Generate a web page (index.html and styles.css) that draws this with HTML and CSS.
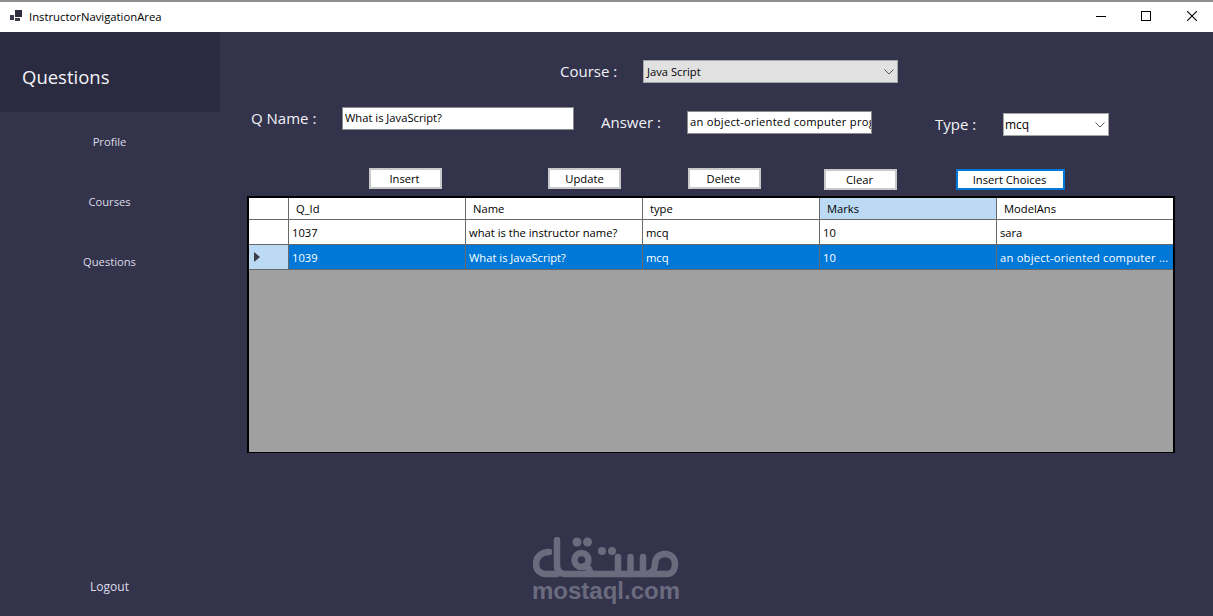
FILE: index.html
```html
<!DOCTYPE html>
<html lang="en">
<head>
<meta charset="utf-8">
<title>InstructorNavigationArea</title>
<link rel="stylesheet" href="styles.css">
</head>
<body>
<div class="window">
  <header class="titlebar">
    <svg class="app-icon" width="12" height="12" viewBox="0 0 12 12"><rect x="0" y="5" width="4" height="5" fill="#3a3a4a"/><rect x="5" y="8" width="5" height="3" fill="#3a3a4a"/><rect x="5" y="0" width="7" height="7" fill="#2c2c3c"/></svg>
    <span class="app-title">InstructorNavigationArea</span>
    <div class="win-controls">
      <svg class="win-btn" width="10" height="10" viewBox="0 0 10 10"><path d="M0 5.5H10" stroke="#000" fill="none"/></svg>
      <svg class="win-btn" width="10" height="10" viewBox="0 0 10 10"><rect x=".5" y=".5" width="9" height="9" stroke="#000" fill="none"/></svg>
      <svg class="win-btn" width="10" height="10" viewBox="0 0 10 10"><path d="M0 0L10 10M10 0L0 10" stroke="#000" stroke-width="1.1" fill="none"/></svg>
    </div>
  </header>
  <div class="app-body">
    <aside class="sidebar">
      <div class="side-head">Questions</div>
      <nav class="side-nav">
        <a class="side-link">Profile</a>
        <a class="side-link">Courses</a>
        <a class="side-link">Questions</a>
      </nav>
      <a class="side-link logout">Logout</a>
    </aside>
    <main class="content">
      <div class="course-row">
        <label class="field-label">Course :</label>
        <div class="combo combo-grey">Java Script
          <svg class="chev" width="10" height="6" viewBox="0 0 10 6"><path d="M.5 .5L5 5L9.5 .5" stroke="#555" fill="none"/></svg>
        </div>
      </div>
      <div class="q-row">
        <label class="field-label lbl-q">Q Name :</label>
        <div class="textbox tb-q">What is JavaScript?</div>
        <label class="field-label lbl-a">Answer :</label>
        <div class="textbox tb-a">an object-oriented computer prog</div>
        <label class="field-label lbl-t">Type :</label>
        <div class="combo combo-type">mcq
          <svg class="chev" width="10" height="6" viewBox="0 0 10 6"><path d="M.5 .5L5 5L9.5 .5" stroke="#555" fill="none"/></svg>
        </div>
      </div>
      <div class="btn-row">
        <button class="btn b-insert">Insert</button>
        <button class="btn b-update">Update</button>
        <button class="btn b-delete">Delete</button>
        <button class="btn b-clear">Clear</button>
        <button class="btn btn-focus">Insert Choices</button>
      </div>
      <div class="grid">
        <div class="grid-row head">
          <div class="cell rowhead"></div>
          <div class="cell">Q_Id</div>
          <div class="cell">Name</div>
          <div class="cell">type</div>
          <div class="cell sorted">Marks</div>
          <div class="cell">ModelAns</div>
        </div>
        <div class="grid-row">
          <div class="cell rowhead"></div>
          <div class="cell">1037</div>
          <div class="cell">what is the instructor name?</div>
          <div class="cell">mcq</div>
          <div class="cell">10</div>
          <div class="cell">sara</div>
        </div>
        <div class="grid-row selected">
          <div class="cell rowhead current"><svg width="6" height="10" viewBox="0 0 6 10"><path d="M0 0L6 5L0 10Z" fill="#3c3c46"/></svg></div>
          <div class="cell">1039</div>
          <div class="cell">What is JavaScript?</div>
          <div class="cell">mcq</div>
          <div class="cell">10</div>
          <div class="cell cell-long">an object-oriented computer ...</div>
        </div>
      </div>
      <div class="watermark">
        <svg class="wm-logo" width="146" height="42" viewBox="0 0 146 42" fill="none" stroke="#6b6b7e" stroke-width="6.5" stroke-linecap="round" stroke-linejoin="round">
          <path d="M24 3V28C24 34 27 37 33 37H134C139 37 142 33 142 27C142 21 138 17 132 17C126 17 122 21 122 27C122 33 118 37 112 37"/>
          <path d="M16 15C8 15 3 20 3 27C3 33 7 37 13 37H24"/>
          <circle cx="48.500" cy="23" r="7"/>
          <path d="M52 29C58 32 58 37 54 37"/>
          <path d="M85 20V37M97.500 20V37M110 20V37"/>
          <g fill="#6b6b7e" stroke="none">
            <circle cx="44" cy="5" r="4.500"/>
            <circle cx="54.500" cy="5" r="4.500"/>
            <circle cx="69" cy="14" r="4"/>
            <circle cx="79" cy="14" r="4"/>
          </g>
        </svg>
        <span class="wm-text">mostaql.com</span>
      </div>
    </main>
  </div>
</div>
</body>
</html>
```
FILE: styles.css
```css
* { box-sizing: border-box; }
html, body { margin: 0; padding: 0; }
body { width: 1213px; height: 616px; overflow: hidden; font-family: "Open Sans", "Noto Sans", sans-serif; font-size: 11px; color: #000; background: #33334c; }
.window { display: flex; flex-direction: column; height: 616px; }
.titlebar { flex: none; height: 32px; background: #fff; border-top: 2px solid #8f8f8f; display: flex; align-items: center; padding: 0 16px 2px 10px; }
.app-icon { margin-right: 7px; }
.app-title { font-size: 11.3px; }
.win-controls { margin-left: auto; display: flex; }
.win-btn { display: block; width: 10px; }
.win-btn + .win-btn { margin-left: 35px; }
.win-btn + .win-btn + .win-btn { margin-left: 36px; }
.app-body { flex: 1; display: flex; min-height: 0; }
.sidebar { width: 220px; flex: none; display: flex; flex-direction: column; background: #33334c; }
.side-head { height: 80px; background: #2a2a40; color: #f4f4f8; font-size: 18.5px; line-height: 89px; padding-left: 22px; overflow: hidden; }
.side-nav { display: flex; flex-direction: column; }
.side-link { display: block; height: 60px; line-height: 59px; padding-right: 1px; text-align: center; color: #dcdce6; font-size: 11.2px; }
.logout { margin-top: auto; height: 58px; line-height: 58px; font-size: 12px; }
.content { flex: 1; padding: 28px 38px 0 27px; }
.field-label { color: #f2f2f6; font-size: 15px; white-space: nowrap; }
.course-row { display: flex; align-items: flex-start; padding-left: 313px; height: 23px; }
.course-row .field-label { width: 83px; line-height: 23px; }
.combo { position: relative; height: 23px; line-height: 21px; border: 1px solid #a6a6a6; padding-left: 3px; font-size: 11.2px; flex: none; }
.combo-grey { width: 255px; background: #e1e1e1; }
.combo-type { width: 106px; background: #fff; margin-top: 6px; padding-left: 1px; font-size: 12px; }
.chev { position: absolute; right: 3px; top: 8px; }
.q-row { display: flex; align-items: flex-start; padding-left: 4px; margin-top: 24px; height: 37px; }
.lbl-q { width: 91px; line-height: 23px; }
.textbox { height: 23px; background: #fff; border: 1px solid #8a8a8a; line-height: 20px; padding-left: 2px; white-space: nowrap; overflow: hidden; font-size: 11.2px; flex: none; }
.tb-q { width: 232px; }
.lbl-a { width: 86px; margin-left: 27px; margin-top: 4px; line-height: 23px; }
.tb-a { width: 185px; margin-top: 4px; letter-spacing: .25px; }
.lbl-t { width: 68px; margin-left: 63px; margin-top: 6px; line-height: 23px; }
.btn-row { display: flex; align-items: flex-start; padding-left: 122px; margin-top: 24px; height: 28px; }
.btn { width: 73px; height: 21px; background: #fff; border: 2px solid #c9c9c9; padding: 0 2px 0 0; font: 11.2px "Open Sans", "Noto Sans", sans-serif; color: #000; flex: none; }
.b-update { margin-left: 106px; padding: 0; }
.b-delete { margin-left: 67px; }
.b-clear { margin-left: 63px; margin-top: 1px; }
.btn-focus { width: 109px; margin-left: 59px; margin-top: 1px; border-color: #0078d7; }
.grid { width: 928px; height: 257px; background: #a0a0a0; border: 2px solid #000; border-bottom-width: 1px; }
.grid-row { display: grid; grid-template-columns: 40px repeat(4, 177px) 176px; height: 25px; background: #fff; border-bottom: 1px solid #696969; }
.grid-row.head { height: 22px; }
.cell { border-right: 1px solid #696969; padding-left: 3px; line-height: 26px; overflow: hidden; white-space: nowrap; font-size: 11.2px; }
.head .cell { padding-left: 7px; line-height: 21px; }
.cell:last-child { border-right: 0; }
.cell-long { letter-spacing: .22px; }
.sorted { background: #bcdaf3; }
.selected { background: #0078d7; color: #fff; }
.rowhead.current { background: #bcdaf3; display: flex; align-items: center; padding-left: 5px; }
.watermark { display: flex; flex-direction: column; align-items: center; width: 146px; margin: 84px 0 0 286px; }
.wm-logo { display: block; }
.wm-text { color: #6b6b7e; font-family: "Liberation Sans", sans-serif; font-weight: 700; font-size: 24px; line-height: 24px; }
```
